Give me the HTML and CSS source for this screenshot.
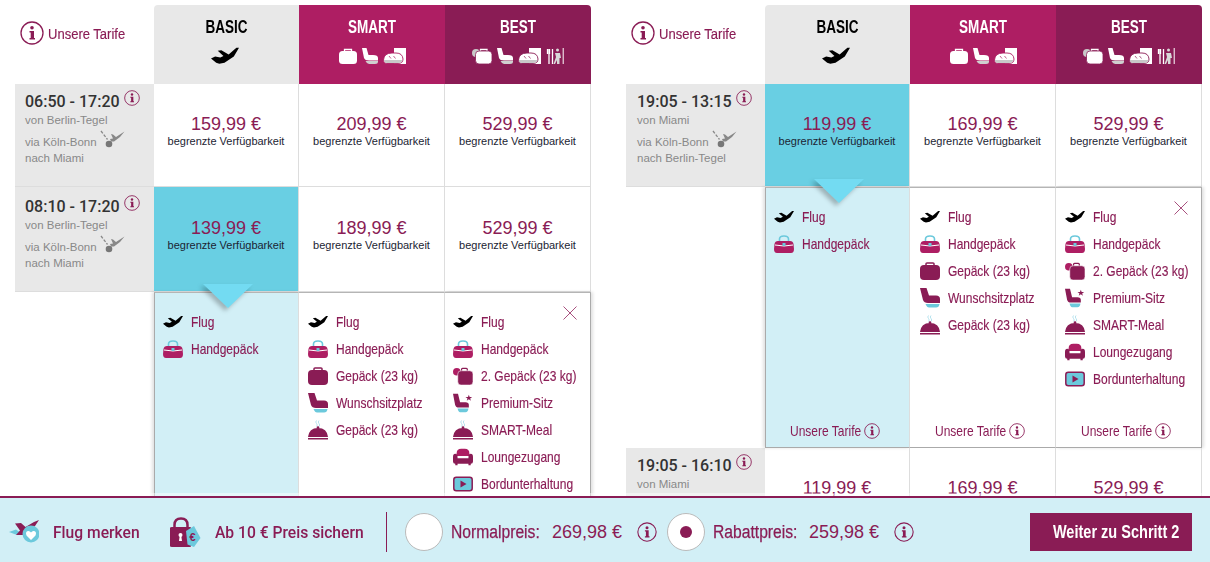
FILE: index.html
```html
<!DOCTYPE html>
<html lang="de">
<head>
<meta charset="utf-8">
<title>Tarife</title>
<link rel="stylesheet" href="styles.css">
</head>
<body>
<svg class="sprite" xmlns="http://www.w3.org/2000/svg">
  <symbol id="plane" viewBox="0 0 27 16"><path fill="currentColor" d="M0 11 4 9 9 10 12 8.500 6.500 3.500 10 3 17 7 24.500 .5 27 .5 22 9 13 15 8 16 5 15Z"/></symbol>
  <symbol id="bag" viewBox="0 0 20 18"><path fill="none" stroke="#6cc9dc" stroke-width="1.600" d="M5.500 6V4Q5.500 1 10 1T14.500 4V6"/><path fill="#ae1e63" d="M4 6H16Q19 6 19.500 9L20 14Q20 18 17 18H3Q0 18 0 14L.5 9Q1 6 4 6Z"/><path fill="none" stroke="#fff" d="M1 10Q10 12 19 10"/><rect x="8.500" y="8" width="3" height="3" fill="#6cc9dc"/></symbol>
  <symbol id="case" viewBox="0 0 20 18"><path fill="none" stroke="currentColor" stroke-width="1.500" d="M6 4V1.800Q6 1 7 1H13Q14 1 14 1.800V4"/><rect y="3" width="20" height="15" rx="4" fill="currentColor"/></symbol>
  <symbol id="seat" viewBox="0 0 20 20"><path fill="currentColor" d="M0 0H6.500L9 7.500H16Q20 7.500 20 11V15H8Q4 15 3 12Z"/><path fill="var(--acc)" d="M5.500 16H19.500Q19 19.500 16 19.500H9Q7 19.500 5.500 16Z"/></symbol>
  <symbol id="cloche" viewBox="0 0 20 19"><path fill="none" stroke="#a5dcea" stroke-width=".8" d="M8.500 0Q7 1.500 8.500 3T8.500 6M11 0Q9.500 1.500 11 3T11 6"/><circle cx="10" cy="7" r="1.300" fill="#8a1c55"/><path fill="#8a1c55" d="M0 16.500Q1 7.500 10 7.500T20 16.500Z"/><rect y="17.500" width="20" height="1.500" fill="#8a1c55"/></symbol>
  <symbol id="twobags" viewBox="0 0 21 19"><circle cx="4" cy="5" r="4" fill="#ae1e63"/><path fill="none" stroke="#8a1c55" stroke-width="1.300" d="M9 5V2.500Q9 1.500 10 1.500H14Q15 1.500 15 2.500V5"/><rect x="5" y="4" width="16" height="15" rx="3.500" fill="#8a1c55" stroke="#fff" stroke-width=".6"/></symbol>
  <symbol id="premium" viewBox="0 0 24 22"><path fill="#8a1c55" d="M0 0H6L8.500 10H15Q19 10 19 13V16.500H7Q3.500 16.500 2.500 13Z"/><path fill="#6cc9dc" d="M5.500 17.500H18.500Q18 22 15 22H8.500Q6.500 22 5.500 17.500Z"/><path fill="#8a1c55" d="M19 1 20 3.800H23L20.600 5.500 21.500 8.300 19 6.600 16.500 8.300 17.400 5.500 15 3.800H18Z"/></symbol>
  <symbol id="lounge" viewBox="0 0 22 18"><path fill="#ae1e63" d="M4 5Q4 0 9 0H13Q18 0 18 5V8H4Z"/><path fill="#8a1c55" d="M0 9Q0 5.500 2.500 5.500T5 9V10.500H17V9Q17 5.500 19.500 5.500T22 9V14Q22 16.500 19.500 16.500V18H17V16.500H5V18H2.500V16.500Q0 16.500 0 14Z"/></symbol>
  <symbol id="screen" viewBox="0 0 20 15"><rect x=".8" y=".8" width="18.400" height="13.400" rx="2.500" fill="#6cc9dc" stroke="#8a1c55" stroke-width="1.500"/><path fill="#8a1c55" d="M7.500 4 13.500 7.500 7.500 11Z"/></symbol>
  <symbol id="w-case" viewBox="0 0 18 16"><path fill="none" stroke="#fff" stroke-width="1.300" d="M5.500 3.500V1.500H12.500V3.500"/><rect y="3" width="18" height="13" rx="3.500" fill="#fff"/></symbol>
  <symbol id="w-seat" viewBox="0 0 16 16"><path fill="#fff" d="M0 0H4.500L6.500 7H11Q16 7 16 10V12.500H7Q3 12.500 2 10Z"/><path fill="#cfcfcf" d="M3.500 13H16V13.500Q16 16 13 16H7Q5 16 3.500 13Z"/></symbol>
  <symbol id="w-bread" viewBox="0 0 23 16"><rect x="11" y="0" width="12" height="16" fill="#fff"/><path fill="#fff" stroke="var(--tier)" stroke-width=".9" d="M.5 12Q1 5 9 5H13Q19.500 5 20 11Q20 15.500 15 15.500H4Q.5 15.500 .5 12Z"/><path fill="#c8c8c8" d="M1 12H19.500Q19 15 15 15H4Q1 15 1 12Z"/><path stroke="var(--tier)" stroke-width=".7" d="M6 8 8 10.500M10.500 8 12.500 10.500"/></symbol>
  <symbol id="w-people" viewBox="0 0 18 16"><path stroke="#fff" stroke-width="1.300" d="M1.500 1V6M3 1V16M3.500 1V6M6.500 1V16"/><circle cx="11.500" cy="2" r="1.500" fill="#d8d8d8"/><path fill="#d8d8d8" d="M9 5H14L15 10H13.500V16H11V12L9 16H7.500L10 9Z"/><path stroke="#fff" d="M17.200 0V16"/></symbol>
  <symbol id="w-twobags" viewBox="0 0 20 16"><circle cx="4" cy="5" r="4" fill="#c8c8c8"/><path fill="none" stroke="#fff" stroke-width="1.300" d="M8.500 3.500V1.500H15V3.500"/><rect x="3.500" y="3" width="16.500" height="13" rx="3.500" fill="#fff" stroke="var(--tier)" stroke-width=".8"/></symbol>
  <symbol id="stop" viewBox="0 0 25 18"><path fill="#888" d="M10 9 13 8.500 11 4 13 4.500 16 7 24.500 1.500 20 7 14 11.500H11Z"/><circle cx="9" cy="14" r="3.300" fill="#777"/><path stroke="#888" stroke-width="1.300" stroke-dasharray="3 1.500" d="M1 1 7.500 9.500"/></symbol>
  <symbol id="info" viewBox="0 0 24 24"><circle cx="12" cy="12" r="11" fill="none" stroke="#8a1c55" stroke-width="1.300"/><circle cx="12" cy="6.800" r="1.800" fill="#8a1c55"/><path fill="#8a1c55" d="M9.500 10H14V17H15V18.500H9.500V17H10.700V11.500H9.500Z"/></symbol>
  <symbol id="close" viewBox="0 0 14 14"><path fill="none" stroke="#a8507e" d="M.5 .5 13.500 13.500M13.500 .5 .5 13.500"/></symbol>
  <symbol id="remember" viewBox="0 0 30 24"><path fill="#6cc9dc" d="M0 12 7 9.500 12 13 8 15Z"/><path fill="#8a1c55" d="M6 3.500 12 3 16.500 7 25 2 30 0 26 6 15 15 7 15 11 10.500Z"/><circle cx="22" cy="14" r="8.500" fill="#6cc9dc"/><path fill="#fff" d="M22 20 17.500 15.500Q16 11.500 19 11 21 10.800 22 12.500 23 10.800 25 11 28 11.500 26.500 15.500Z"/></symbol>
  <symbol id="lock" viewBox="0 0 31 31"><path fill="none" stroke="#8a1c55" stroke-width="2.500" d="M4.500 13V8Q4.500 1.500 11 1.500T17.500 8V13"/><path fill="#8a1c55" d="M2 10H20Q21 10 21 11V29Q21 30 20 30H2Q0 30 0 29V11Q0 10 2 10Z"/><circle cx="10.500" cy="18" r="2" fill="#fff"/><path fill="#fff" d="M9.700 19H11.300L12 24H9Z"/><path fill="#6cc9dc" d="M16 14 24 9 30.500 21 24 30 17.500 27.500Z"/><text x="19.500" y="24" class="tag-euro">€</text></symbol>
</svg>

<main class="stage">
  <section class="fares">
    <div class="row head">
      <div class="tariff-link"><svg class="ic-info-lg"><use href="#info"/></svg><span>Unsere Tarife</span></div>
      <div class="tier basic"><h2>BASIC</h2><div class="tier-icons"><svg class="ti-plane"><use href="#plane"/></svg></div></div>
      <div class="tier smart"><h2>SMART</h2><div class="tier-icons"><svg class="ti-case"><use href="#w-case"/></svg><svg class="ti-seat"><use href="#w-seat"/></svg><svg class="ti-bread"><use href="#w-bread"/></svg></div></div>
      <div class="tier best"><h2>BEST</h2><div class="tier-icons"><svg class="ti-two"><use href="#w-twobags"/></svg><svg class="ti-seat"><use href="#w-seat"/></svg><svg class="ti-bread"><use href="#w-bread"/></svg><svg class="ti-people"><use href="#w-people"/></svg></div></div>
    </div>
    <div class="row flight">
      <div class="times"><div class="time">06:50 - 17:20<svg class="ic-info-sm"><use href="#info"/></svg></div><div class="from">von Berlin-Tegel</div><div class="via">via Köln-Bonn<svg class="ic-stop"><use href="#stop"/></svg></div><div class="to">nach Miami</div></div>
      <div class="price"><strong>159,99 €</strong><small>begrenzte Verfügbarkeit</small></div>
      <div class="price"><strong>209,99 €</strong><small>begrenzte Verfügbarkeit</small></div>
      <div class="price"><strong>529,99 €</strong><small>begrenzte Verfügbarkeit</small></div>
    </div>
    <div class="row flight tall">
      <div class="times"><div class="time">08:10 - 17:20<svg class="ic-info-sm"><use href="#info"/></svg></div><div class="from">von Berlin-Tegel</div><div class="via">via Köln-Bonn<svg class="ic-stop"><use href="#stop"/></svg></div><div class="to">nach Miami</div></div>
      <div class="price selected"><strong>139,99 €</strong><small>begrenzte Verfügbarkeit</small><i class="pointer"></i></div>
      <div class="price"><strong>189,99 €</strong><small>begrenzte Verfügbarkeit</small></div>
      <div class="price"><strong>529,99 €</strong><small>begrenzte Verfügbarkeit</small></div>
    </div>
    <div class="row details">
      <div class="spacer"></div>
      <div class="detail chosen">
        <ul>
          <li><svg class="fi-plane"><use href="#plane"/></svg><span>Flug</span></li>
          <li><svg class="fi"><use href="#bag"/></svg><span>Handgepäck</span></li>
        </ul>
      </div>
      <div class="detail wide">
        <ul>
          <li><svg class="fi-plane"><use href="#plane"/></svg><span>Flug</span></li>
          <li><svg class="fi"><use href="#bag"/></svg><span>Handgepäck</span></li>
          <li><svg class="fi"><use href="#case"/></svg><span>Gepäck (23 kg)</span></li>
          <li><svg class="fi"><use href="#seat"/></svg><span>Wunschsitzplatz</span></li>
          <li><svg class="fi"><use href="#cloche"/></svg><span>Gepäck (23 kg)</span></li>
        </ul>
      </div>
      <div class="detail wide last">
        <svg class="close"><use href="#close"/></svg>
        <ul>
          <li><svg class="fi-plane"><use href="#plane"/></svg><span>Flug</span></li>
          <li><svg class="fi"><use href="#bag"/></svg><span>Handgepäck</span></li>
          <li><svg class="fi"><use href="#twobags"/></svg><span>2. Gepäck (23 kg)</span></li>
          <li><svg class="fi"><use href="#premium"/></svg><span>Premium-Sitz</span></li>
          <li><svg class="fi"><use href="#cloche"/></svg><span>SMART-Meal</span></li>
          <li><svg class="fi"><use href="#lounge"/></svg><span>Loungezugang</span></li>
          <li><svg class="fi"><use href="#screen"/></svg><span>Bordunterhaltung</span></li>
        </ul>
      </div>
    </div>
  </section>

  <section class="fares return">
    <div class="row head">
      <div class="tariff-link"><svg class="ic-info-lg"><use href="#info"/></svg><span>Unsere Tarife</span></div>
      <div class="tier basic"><h2>BASIC</h2><div class="tier-icons"><svg class="ti-plane"><use href="#plane"/></svg></div></div>
      <div class="tier smart"><h2>SMART</h2><div class="tier-icons"><svg class="ti-case"><use href="#w-case"/></svg><svg class="ti-seat"><use href="#w-seat"/></svg><svg class="ti-bread"><use href="#w-bread"/></svg></div></div>
      <div class="tier best"><h2>BEST</h2><div class="tier-icons"><svg class="ti-two"><use href="#w-twobags"/></svg><svg class="ti-seat"><use href="#w-seat"/></svg><svg class="ti-bread"><use href="#w-bread"/></svg><svg class="ti-people"><use href="#w-people"/></svg></div></div>
    </div>
    <div class="row flight">
      <div class="times"><div class="time">19:05 - 13:15<svg class="ic-info-sm"><use href="#info"/></svg></div><div class="from">von Miami</div><div class="via">via Köln-Bonn<svg class="ic-stop"><use href="#stop"/></svg></div><div class="to">nach Berlin-Tegel</div></div>
      <div class="price selected"><strong>119,99 €</strong><small>begrenzte Verfügbarkeit</small><i class="pointer"></i></div>
      <div class="price"><strong>169,99 €</strong><small>begrenzte Verfügbarkeit</small></div>
      <div class="price"><strong>529,99 €</strong><small>begrenzte Verfügbarkeit</small></div>
    </div>
    <div class="row details">
      <div class="spacer"></div>
      <div class="detail chosen">
        <ul>
          <li><svg class="fi-plane"><use href="#plane"/></svg><span>Flug</span></li>
          <li><svg class="fi"><use href="#bag"/></svg><span>Handgepäck</span></li>
        </ul>
        <div class="detail-foot"><span>Unsere Tarife</span><svg class="ic-info-sm"><use href="#info"/></svg></div>
      </div>
      <div class="detail wide">
        <ul>
          <li><svg class="fi-plane"><use href="#plane"/></svg><span>Flug</span></li>
          <li><svg class="fi"><use href="#bag"/></svg><span>Handgepäck</span></li>
          <li><svg class="fi"><use href="#case"/></svg><span>Gepäck (23 kg)</span></li>
          <li><svg class="fi"><use href="#seat"/></svg><span>Wunschsitzplatz</span></li>
          <li><svg class="fi"><use href="#cloche"/></svg><span>Gepäck (23 kg)</span></li>
        </ul>
        <div class="detail-foot"><span>Unsere Tarife</span><svg class="ic-info-sm"><use href="#info"/></svg></div>
      </div>
      <div class="detail wide last">
        <svg class="close"><use href="#close"/></svg>
        <ul>
          <li><svg class="fi-plane"><use href="#plane"/></svg><span>Flug</span></li>
          <li><svg class="fi"><use href="#bag"/></svg><span>Handgepäck</span></li>
          <li><svg class="fi"><use href="#twobags"/></svg><span>2. Gepäck (23 kg)</span></li>
          <li><svg class="fi"><use href="#premium"/></svg><span>Premium-Sitz</span></li>
          <li><svg class="fi"><use href="#cloche"/></svg><span>SMART-Meal</span></li>
          <li><svg class="fi"><use href="#lounge"/></svg><span>Loungezugang</span></li>
          <li><svg class="fi"><use href="#screen"/></svg><span>Bordunterhaltung</span></li>
        </ul>
        <div class="detail-foot"><span>Unsere Tarife</span><svg class="ic-info-sm"><use href="#info"/></svg></div>
      </div>
    </div>
    <div class="row flight">
      <div class="times"><div class="time">19:05 - 16:10<svg class="ic-info-sm"><use href="#info"/></svg></div><div class="from">von Miami</div></div>
      <div class="price"><strong>119,99 €</strong></div>
      <div class="price"><strong>169,99 €</strong></div>
      <div class="price"><strong>529,99 €</strong></div>
    </div>
  </section>
</main>

<footer class="bar">
  <svg class="ic-remember"><use href="#remember"/></svg><span class="cta cta-remember">Flug merken</span>
  <svg class="ic-lock"><use href="#lock"/></svg><span class="cta cta-secure">Ab 10 € Preis sichern</span>
  <div class="divider"></div>
  <span class="radio"></span><span class="opt-label normal">Normalpreis:</span><span class="opt-price">269,98 €</span><svg class="ic-info-md"><use href="#info"/></svg>
  <span class="radio on"></span><span class="opt-label rebate">Rabattpreis:</span><span class="opt-price">259,98 €</span><svg class="ic-info-md"><use href="#info"/></svg>
  <button class="next"><span>Weiter zu Schritt 2</span></button>
</footer>
</body>
</html>
```

FILE: styles.css
```css
* { box-sizing: border-box; }
html, body { margin: 0; padding: 0; height: 100%; }
body {
  width: 1210px; height: 562px; overflow: hidden; background: #fff;
  display: flex; flex-direction: column;
  font-family: "Liberation Sans", Arial, sans-serif; color: #333;
}
.sprite { display: none; }
.tag-euro { font: bold 11px "Liberation Sans", sans-serif; fill: #8a1c55; }

.stage { height: 496px; overflow: hidden; padding: 5px 0 0 15px; display: flex; gap: 35px; flex: none; }
.fares { width: 576px; flex: none; }
.row { display: grid; grid-template-columns: 139px 145px 146px 146px; }

.head { height: 79px; }
.tariff-link { display: flex; align-items: flex-start; padding: 16px 0 0 5px; color: #8a1c55; font-size: 15.500px; }
.tariff-link span { margin: 4px 0 0 4px; white-space: nowrap; transform: scaleX(.84); transform-origin: left center; width: 94px; flex: none; -webkit-text-stroke: .15px #8a1c55; }
.ic-info-lg { width: 24px; height: 24px; flex: none; }
.tier { text-align: center; padding-top: 12px; --tier: #ae1e63; }
.tier h2 { margin: 0; font: bold 18px/20px "Liberation Sans", sans-serif; transform: scaleX(.75); }
.tier.basic { background: #e8e8e8; color: #000; border-top-left-radius: 4px; }
.tier.smart { background: #ae1e63; color: #fff; }
.tier.best { background: #8a1c55; color: #fff; border-top-right-radius: 4px; --tier: #8a1c55; }
.tier-icons { display: flex; justify-content: center; align-items: flex-end; gap: 5px; height: 16px; margin-top: 11px; }
.basic .tier-icons { margin-top: 7px; height: 22px; align-items: center; padding-right: 4px; }
.ti-plane { width: 28px; height: 17px; color: #000; }
.ti-case { width: 18px; height: 16px; }
.ti-seat { width: 16px; height: 16px; }
.ti-bread { width: 23px; height: 16px; }
.ti-two { width: 20px; height: 16px; }
.ti-people { width: 18px; height: 16px; }

.flight { height: 103px; border-bottom: 1px solid #ddd; }
.flight.tall { height: 105px; }
.times { background: #e8e8e8; padding: 8px 0 0 10px; font-size: 11.500px; color: #888; }
.tall .times { padding-top: 10px; }
.return .times { padding-left: 11px; }
.time { font: 500 16px/20px Roboto, "Liberation Sans", sans-serif; color: #333; display: flex; align-items: flex-start; height: 21px; }
.ic-info-sm { width: 16px; height: 16px; flex: none; }
.time .ic-info-sm { margin: -2px 0 0 4px; }
.from { line-height: 16px; margin-top: -1px; }
.via { line-height: 16px; margin-top: 6px; display: flex; align-items: flex-end; height: 16px; }
.ic-stop { width: 25px; height: 18px; margin: 0 0 2px 3px; flex: none; }
.to { line-height: 16px; }

.price { border-right: 1px solid #ddd; text-align: center; padding-top: 31px; position: relative; }
.tall .price { padding-top: 32px; }
.price strong { display: block; font: 400 18px/18px "Liberation Sans", sans-serif; color: #8a1c55; }
.price small { display: block; font-size: 11px; line-height: 16px; color: #1c2433; }
.price.selected { background: #69cfe3; }
.pointer {
  position: absolute; left: 49px; bottom: -17px; width: 0; height: 0; z-index: 3;
  border-left: 25px solid transparent; border-right: 25px solid transparent; border-top: 24px solid #73dbf2;
  filter: drop-shadow(-3px 3px 2px rgba(0,0,0,.25));
}

.details { height: 261px; }
.detail { display: flex; flex-direction: column; position: relative; border-top: 1px solid #b5b5b5; border-bottom: 1px solid #aaa; border-right: 1px solid #ddd; background: #fff; }
.detail.chosen { background: #d2eff6; border-left: 1px solid #aaa; box-shadow: -2px 0 3px rgba(0,0,0,.12); }
.detail.last { border-right: 1px solid #aaa; box-shadow: 2px 0 3px rgba(0,0,0,.12); }
.detail ul { list-style: none; margin: 0; padding: 15px 0 0 8px; }
.detail.wide ul { padding-left: 9px; }
.detail.last ul { padding-left: 8px; }
.return .detail.wide ul { padding-left: 10px; }
.return .detail.last ul { padding-left: 9px; }
.detail li { display: flex; align-items: center; height: 27px; color: #8a1c55; font-size: 15px; }
.detail li span { white-space: nowrap; transform: scaleX(.8); transform-origin: left center; flex: none; -webkit-text-stroke: .15px #8a1c55; }
.fi, .fi-plane { width: 20px; height: 20px; margin-right: 8px; flex: none; color: #8a1c55; --acc: #6cc9dc; }
.fi-plane { color: #000; height: 13px; }
.close { position: absolute; top: 13px; right: 13px; width: 14px; height: 14px; }
.detail-foot { margin-top: auto; height: 31px; display: flex; align-items: flex-start; font-size: 15px; line-height: 16px; color: #8a1c55; padding: 7px 0 0 24px; }
.detail.wide .detail-foot { padding-left: 25px; }
.detail-foot span { width: 74px; flex: none; white-space: nowrap; transform: scaleX(.8); transform-origin: left center; }

.bar { height: 66px; flex: none; position: relative; z-index: 5; background: #d2eff6; border-top: 2px solid #8a1c55; box-shadow: 0 -3px 0 rgba(255,255,255,.45); display: flex; align-items: center; padding: 4px 18px 0 9px; color: #8a1c55; }
.cta, .opt-label, .opt-price { white-space: nowrap; flex: none; transform-origin: left center; }
.cta { font: 500 17px Roboto, "Liberation Sans", sans-serif; transform: scaleX(.92); }
.cta-remember { width: 87px; }
.cta-secure { width: 147px; }
.ic-remember { width: 30px; height: 24px; margin: 0 14px 0 0; flex: none; }
.ic-lock { width: 31px; height: 31px; margin: 0 14px 0 30px; flex: none; }
.divider { width: 1px; height: 40px; background: #8a1c55; margin: 0 18px 0 24px; flex: none; }
.radio { width: 38px; height: 38px; border-radius: 50%; background: #fff; border: 1px solid #bbb; display: flex; align-items: center; justify-content: center; flex: none; }
.radio.on::after { content: ""; width: 12px; height: 12px; border-radius: 50%; background: #8a1c55; }
.opt-label { font-size: 18px; -webkit-text-stroke: .25px #8a1c55; margin: 0 12px 0 8px; transform: scaleX(.87); }
.normal { width: 89px; }
.rebate { width: 84px; }
.opt-price { font-size: 18px; width: 70px; margin-right: 15px; }
.ic-info-md { width: 20px; height: 20px; flex: none; margin-right: 10px; }
.next { margin-left: auto; width: 162px; height: 38px; background: #8a1c55; color: #fff; border: 0; padding: 0 0 0 10px; font: bold 17.500px "Liberation Sans", sans-serif; white-space: nowrap; }
.next span { display: block; transform: scaleX(.83); }
```
